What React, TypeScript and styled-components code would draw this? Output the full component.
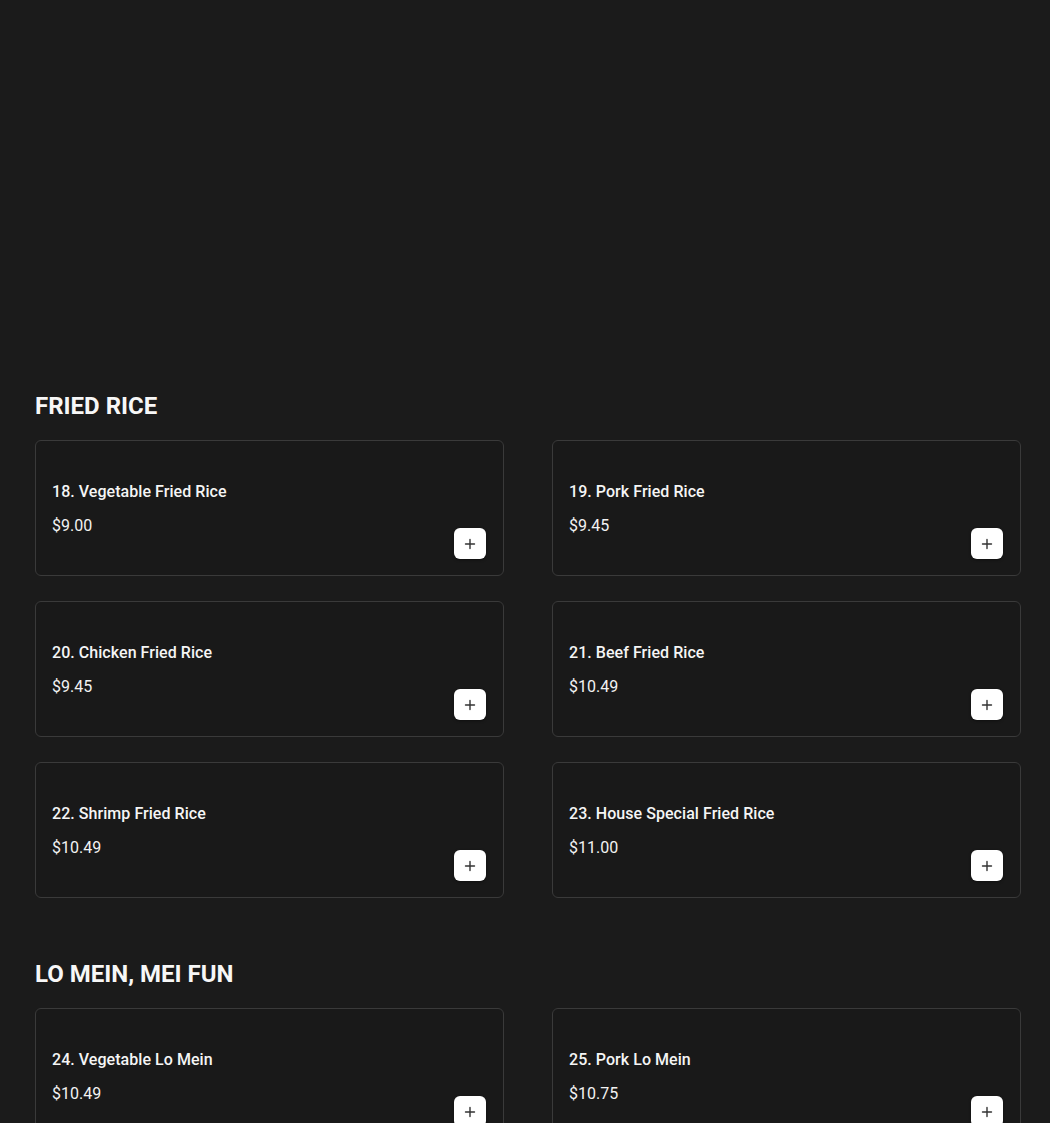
import React from 'react';
import styled, { createGlobalStyle } from 'styled-components';

const GlobalStyle = createGlobalStyle`
    * {
        box-sizing: border-box;
    }

    body {
        margin: 0;
        background-color: #1b1b1b;
        font-family: Roboto, 'Liberation Sans', sans-serif;
        color: #f4f4f4;
    }
`;

type Item = {
    name: string;
    price: string;
};

type Section = {
    title: string;
    items: Item[];
};

const sections: Section[] = [
    {
        title: 'FRIED RICE',
        items: [
            { name: '18. Vegetable Fried Rice', price: '$9.00' },
            { name: '19. Pork Fried Rice', price: '$9.45' },
            { name: '20. Chicken Fried Rice', price: '$9.45' },
            { name: '21. Beef Fried Rice', price: '$10.49' },
            { name: '22. Shrimp Fried Rice', price: '$10.49' },
            { name: '23. House Special Fried Rice', price: '$11.00' },
        ],
    },
    {
        title: 'LO MEIN, MEI FUN',
        items: [
            { name: '24. Vegetable Lo Mein', price: '$10.49' },
            { name: '25. Pork Lo Mein', price: '$10.75' },
        ],
    },
];

const Page = styled.main`
    padding: 390px 29px 0 35px;
`;

const MenuSection = styled.section`
    margin-bottom: 60px;
`;

const SectionTitle = styled.h2`
    margin: 0 0 18px 0;
    font-size: 24px;
    line-height: 32px;
    font-weight: 700;
    color: #f7f7f7;
`;

const Grid = styled.div`
    display: grid;
    grid-template-columns: 469px 469px;
    column-gap: 48px;
    row-gap: 25px;
`;

const Card = styled.div`
    display: flex;
    justify-content: space-between;
    min-height: 136px;
    padding: 16px 17px 16px 16px;
    border: 1px solid #3a3a3a;
    border-radius: 6px;
    background-color: #191919;
`;

const Info = styled.div`
    display: flex;
    flex-direction: column;
    gap: 14px;
    margin-top: 25px;
`;

const Name = styled.span`
    font-size: 16px;
    line-height: 20px;
    font-weight: 500;
    letter-spacing: 0.05px;
    color: #f5f5f5;
`;

const Price = styled.span`
    font-size: 16px;
    line-height: 20px;
    font-weight: 400;
    color: #f2f2f2;
`;

const AddBtn = styled.button`
    align-self: flex-end;
    display: flex;
    align-items: center;
    justify-content: center;
    width: 32px;
    height: 31px;
    padding: 0;
    border: none;
    border-radius: 6px;
    background-color: #ffffff;
    cursor: pointer;
    box-shadow: 0 1px 3px rgba(0, 0, 0, 0.4);
`;

function PlusIcon() {
    return (
        <svg width='12' height='12' viewBox='0 0 12 12' fill='none'>
            <path d='M6 1.5v9M1.5 6h9' stroke='#333' strokeWidth='1.4' strokeLinecap='round' />
        </svg>
    );
}

export default function App(): JSX.Element {
    return (
        <>
            <GlobalStyle />
            <Page>
                {sections.map((section) => (
                    <MenuSection key={section.title}>
                        <SectionTitle>{section.title}</SectionTitle>
                        <Grid>
                            {section.items.map((item) => (
                                <Card key={item.name}>
                                    <Info>
                                        <Name>{item.name}</Name>
                                        <Price>{item.price}</Price>
                                    </Info>
                                    <AddBtn aria-label={`Add ${item.name}`}>
                                        <PlusIcon />
                                    </AddBtn>
                                </Card>
                            ))}
                        </Grid>
                    </MenuSection>
                ))}
            </Page>
        </>
    );
}
